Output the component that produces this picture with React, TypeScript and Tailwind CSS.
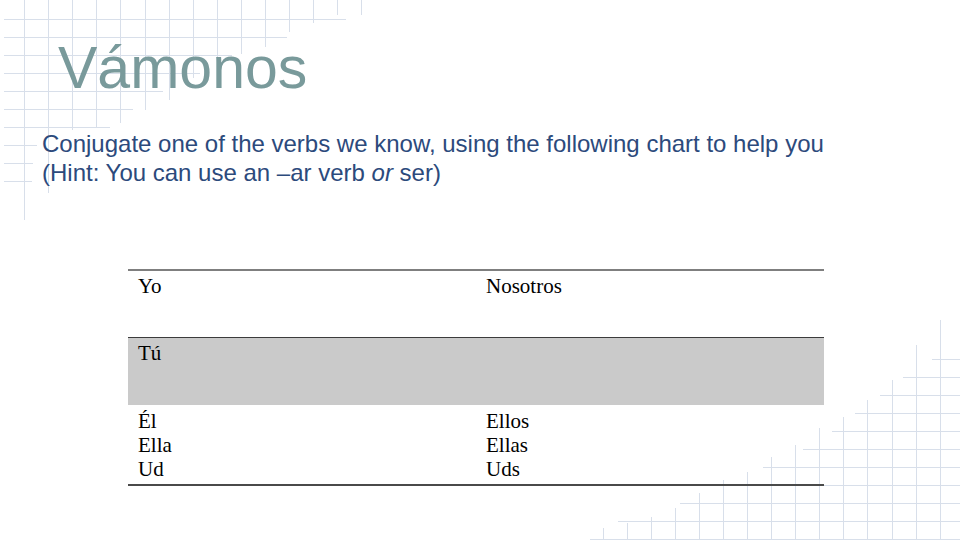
const GRID_COLOR = "#d8dfea";

// top-left corner grid: [x, yEnd] for verticals, [y, xEnd] for horizontals
const TL_V = [[24,220],[48,193],[72,130],[96,127],[120,123],[145,110],[169,100],[193,78],[217,62],[241,54],[265,47],[289,32],[313,23],[337,15],[361,15]];
const TL_H = [[19,346],[37,287],[55,232],[73,200],[91,163],[109,133],[127,110],[145,37],[163,33],[181,32]];

// bottom-right corner grid: [x, yStart] for verticals, [y, xStart] for horizontals
const BR_V = [[603,528],[627,523],[651,517],[675,508],[699,493],[723,480],[747,472],[771,457],[795,445],[819,428],[843,417],[867,400],[892,380],[916,345],[940,320]];
const BR_H = [[359,932],[377,903],[395,880],[413,855],[431,832],[449,803],[467,763],[485,724],[503,680],[521,618],[539,590]];

function CornerGrids() {
  return (
    <svg className="absolute inset-0 pointer-events-none" width={960} height={540} viewBox="0 0 960 540">
      <g stroke={GRID_COLOR} strokeWidth={1} shapeRendering="crispEdges">
        {TL_V.map(([x,y])=><line key={"tv"+x} x1={x+0.5} y1={0} x2={x+0.5} y2={y}/>)}
        {TL_H.map(([y,x])=><line key={"th"+y} x1={4} y1={y+0.5} x2={x} y2={y+0.5}/>)}
        {BR_V.map(([x,y])=><line key={"bv"+x} x1={x+0.5} y1={y} x2={x+0.5} y2={540}/>)}
        {BR_H.map(([y,x])=><line key={"bh"+y} x1={x} y1={y+0.5} x2={960} y2={y+0.5}/>)}
      </g>
    </svg>
  );
}

const cell = "align-top pl-[10px] pr-2 w-[348px]";

export default function App() {
  return (
    <div className="relative w-[960px] h-[540px] overflow-hidden bg-white">
      <CornerGrids/>
      <div className="relative flex flex-col">
        <h1 className="ml-[58px] mt-[38px] text-[59px] leading-[60px] text-[#799a9b]" style={{fontFamily:'"Liberation Sans", Arial, sans-serif'}}>
          Vámonos
        </h1>
        <p className="ml-[42px] mt-[31px] text-[24px] leading-[29px] text-[#2c4a7c]" style={{fontFamily:'"Liberation Sans", Arial, sans-serif'}}>
          Conjugate one of the verbs we know, using the following chart to help you<br/>
          (Hint: You can use an –ar verb <i>or</i> ser)
        </p>

        {/* chart */}
        <table className="ml-[128px] mt-[82px] w-[696px] border-collapse text-[21px] leading-[24px] text-black" style={{fontFamily:'"Liberation Serif", "Times New Roman", serif'}}>
          <tbody>
            <tr className="h-[67px] border-t-2 border-[#7f7f7f]">
              <td className={`${cell} pt-[3px]`}>Yo</td>
              <td className={`${cell} pt-[3px]`}>Nosotros</td>
            </tr>
            <tr className="h-[68px] bg-[#cacaca] border-t border-[#3c3c3c]">
              <td className={`${cell} pt-[3px]`}>Tú</td>
              <td className={`${cell} pt-[3px]`}></td>
            </tr>
            <tr className="h-[80px] border-b-2 border-[#4a4a4a]">
              <td className={`${cell} pt-[4px]`}>Él<br/>Ella<br/>Ud</td>
              <td className={`${cell} pt-[4px]`}>Ellos<br/>Ellas<br/>Uds</td>
            </tr>
          </tbody>
        </table>
      </div>
    </div>
  );
}
